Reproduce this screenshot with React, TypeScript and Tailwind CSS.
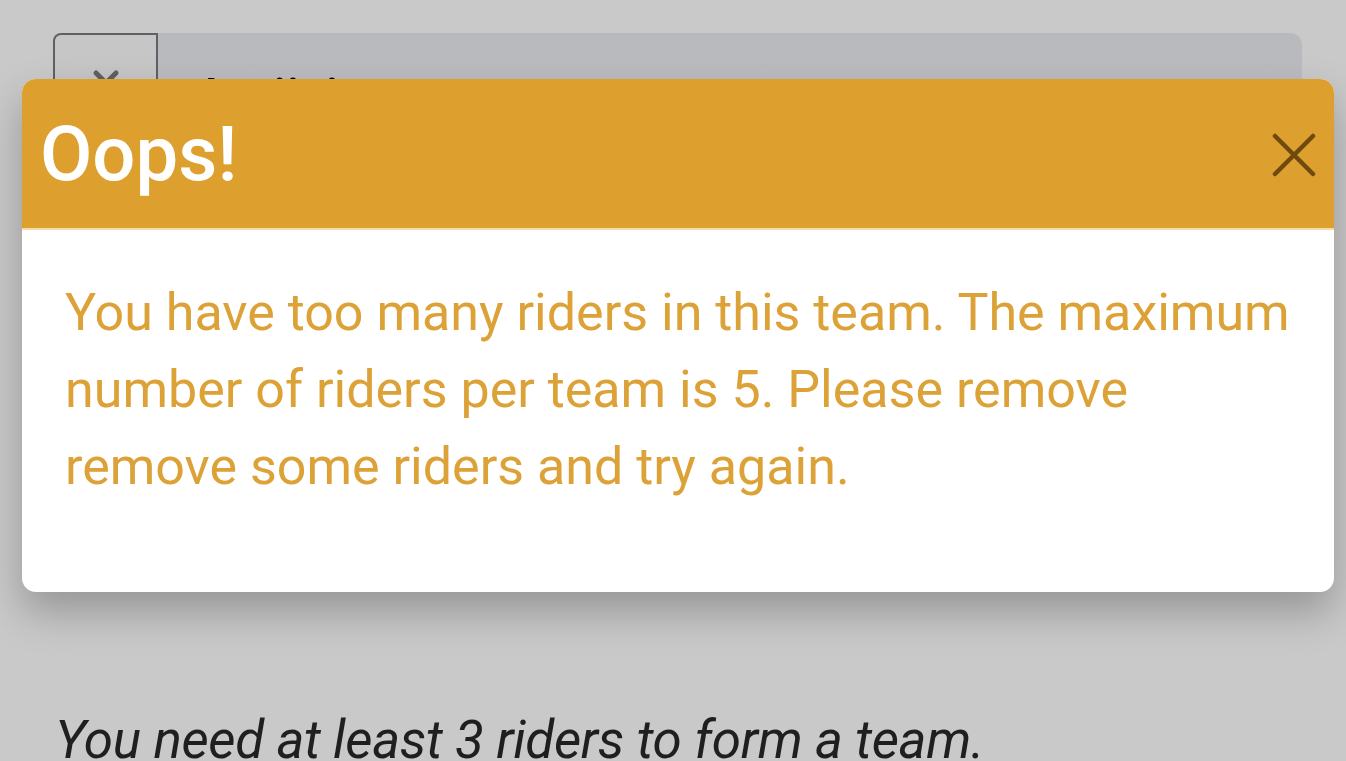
import { X } from "lucide-react"

export default function App() {
  return (
    <div className="relative h-[761px] w-full overflow-hidden bg-[#c9c9c9] font-['Roboto',sans-serif]">
      {/* page behind the dialog */}
      <div className="pl-[53px] pr-[44px] pt-[33px]">
        <div className="flex h-[120px]">
          <div className="flex w-[105px] justify-center rounded-tl-lg border-2 border-[#5f6063] bg-[#c6c6c6] pt-[28px]">
            <X className="h-10 w-10 text-[#5f6063]" strokeWidth={3} />
          </div>
          <div className="flex-1 rounded-tr-xl bg-gradient-to-b from-[#b8b9bc] to-[#c0c1c4] pl-[36px] pt-[26px] text-[52px] font-medium text-black">
            Actiivist
          </div>
        </div>
      </div>

      <div className="mt-[561px] pl-[55px] text-[53px] italic leading-none tracking-[-0.007em] text-[#1f1f1f]">
        You need at least 3 riders to form a team.
      </div>

      {/* dialog */}
      <div className="absolute left-[22px] top-[79px] w-[1312px] overflow-hidden rounded-[14px] bg-white shadow-[0_20px_40px_rgba(0,0,0,0.25)]">
        <div className="flex h-[151px] items-center justify-between border-b-2 border-[#f3dcaa] bg-[#dda02f] pl-[18px] pr-[18px]">
          <h1 className="text-[76px] font-medium leading-none text-white">Oops!</h1>
          <svg width="44" height="44" viewBox="0 0 44 44" className="mt-[2px]">
            <path d="M3 3 L41 41 M41 3 L3 41" stroke="#6e4a0e" strokeWidth="4.5" strokeLinecap="round" />
          </svg>
        </div>
        <div className="h-[362px] px-[43px] pt-[44px] text-[52px] leading-[77px] text-[#dca237]">
          You have too many riders in this team. The maximum number of riders per team is 5. Please remove remove some riders and try again.
        </div>
      </div>
    </div>
  )
}
